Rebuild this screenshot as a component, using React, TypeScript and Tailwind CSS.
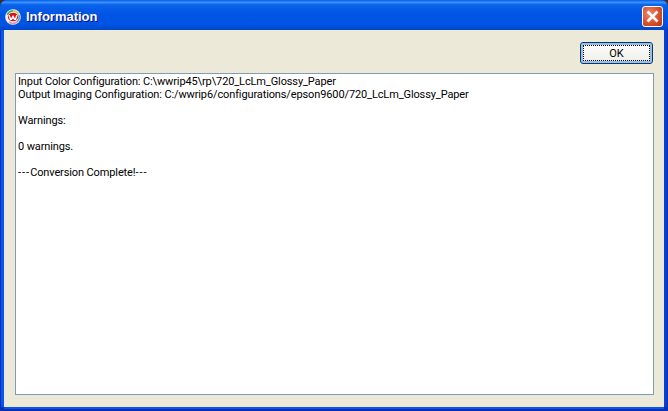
export default function App() {
    const lines = [
        'Input Color Configuration: C:\\wwrip45\\rp\\720_LcLm_Glossy_Paper',
        'Output Imaging Configuration: C:/wwrip6/configurations/epson9600/720_LcLm_Glossy_Paper',
        '',
        'Warnings:',
        '',
        '0 warnings.',
        '',
    ];

    return (
        <div className="w-[668px] h-[411px] bg-[#333333]">
            <div className="w-full h-full flex flex-col overflow-hidden rounded-t-[7px] bg-[#0a2fb5] font-['Roboto',sans-serif]">
                {/* Title bar */}
                <div className="h-[30px] shrink-0 flex items-center justify-between pt-[3px] pl-[5px] pr-[5px] bg-[linear-gradient(180deg,#0a5ae6_0%,#3a93ff_8%,#0a62ea_16%,#0054e3_50%,#0055e5_80%,#0046c8_100%)]">
                    <div className="flex items-center gap-[5px]">
                        <svg width="16" height="16" viewBox="0 0 16 16">
                            <circle cx="8" cy="8" r="7.8" fill="#f4f4f4" />
                            <path d="M1.500 5.500A7 7 0 0 1 8 1v1.700A5.400 5.400 0 0 0 3 6.200z" fill="#3fb56a" />
                            <path d="M8 1a7 7 0 0 1 6.500 4.500L13 6.200A5.400 5.400 0 0 0 8 2.700z" fill="#e6c84e" />
                            <path d="M14.500 5.500a7 7 0 0 1-2 8l-1-1.200a5.400 5.400 0 0 0 1.500-6.100z" fill="#5aa0e0" />
                            <path d="M12.500 13.500a7 7 0 0 1-9 0l1-1.200a5.400 5.400 0 0 0 7 0z" fill="#e88ab0" />
                            <ellipse cx="8" cy="8" rx="5.200" ry="4.200" fill="#d8141c" />
                            <path d="M4 6l1.500 4.200h1L8 7.600l1.500 2.600h1L12 6" fill="none" stroke="#fff" strokeWidth="1.500" />
                        </svg>
                        <span className="text-[13px] leading-none font-bold text-white font-['Liberation_Sans',sans-serif] [text-shadow:1px_1px_0_#0f1089]">Information</span>
                    </div>
                    <button className="w-[21px] h-[21px] flex items-center justify-center rounded-[3px] border border-white bg-[radial-gradient(circle_at_35%_35%,#e98a6c,#d8502c_55%,#c0330f)]">
                        <svg width="15" height="15" viewBox="0 0 15 15">
                            <path d="M2.500 2.500l10 10M12.500 2.500l-10 10" stroke="#fff" strokeWidth="2.600" />
                        </svg>
                    </button>
                </div>

                {/* Dialog body */}
                <div className="flex-1 mx-1 mb-1 flex flex-col items-stretch bg-[#ece9d8] pt-3 pl-[11px] pr-[10px] pb-3 shadow-[-3px_0_0_#0757ee,3px_0_0_#0a3fd6,0_2px_0_#0757ee]">
                    <div className="flex justify-end pr-[1px]">
                        <button className="w-[73px] h-[22px] flex items-center justify-center rounded-[3px] border border-[#003c74] bg-[linear-gradient(180deg,#fff,#f0f0ea_85%,#dcd8c8)] shadow-[inset_0_0_0_2px_#9dbce8] text-[11px] text-black leading-none">
                            <span className="w-[67px] h-[16px] flex items-center justify-center border border-dotted border-black">OK</span>
                        </button>
                    </div>
                    <div className="flex-1 mt-[9px] border border-[#7f9db9] bg-white pt-[1px] pl-[2px] text-[11px] leading-[13px] tracking-[-0.12px] text-black">
                        {lines.map((line, i) => (
                            <div key={i} className="h-[13px] whitespace-pre">{line}</div>
                        ))}
                        <div className="h-[13px] whitespace-pre">
                            <span className="tracking-[1px]">---</span>Conversion Complete!<span className="tracking-[1px]">---</span>
                        </div>
                    </div>
                </div>
            </div>
        </div>
    );
}
